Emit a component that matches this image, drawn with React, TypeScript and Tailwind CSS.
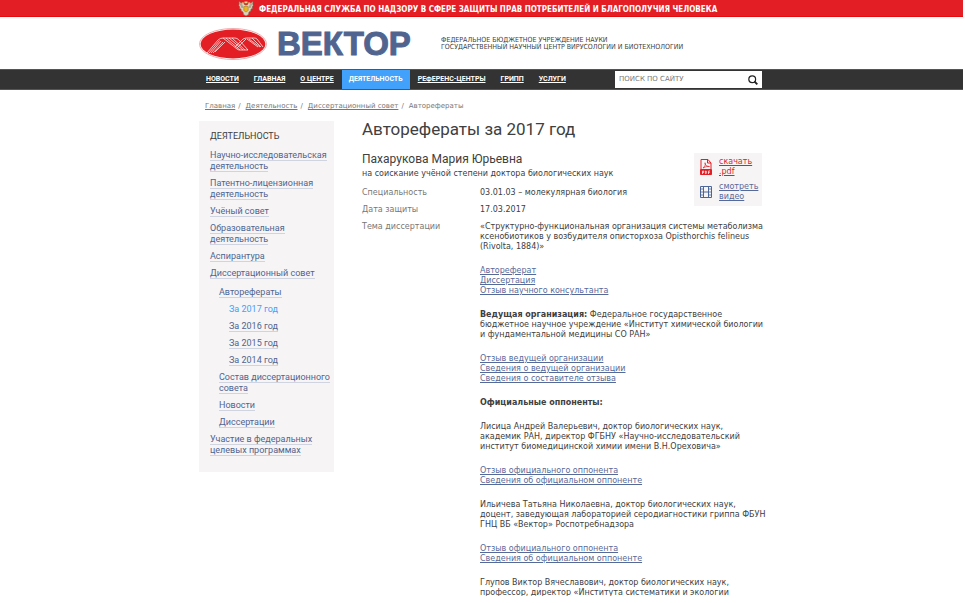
import React, { useState } from "react";

interface MenuItem {
  label: string;
  level: 0 | 1 | 2;
  active?: boolean;
  open?: boolean;
}

const navItems = [
  "Новости",
  "Главная",
  "О центре",
  "Деятельность",
  "Референс-центры",
  "Грипп",
  "Услуги",
];

const crumbs = ["Главная", "Деятельность", "Диссертационный совет"];

const menu: MenuItem[] = [
  { label: "Научно-исследовательская деятельность", level: 0 },
  { label: "Патентно-лицензионная деятельность", level: 0 },
  { label: "Учёный совет", level: 0 },
  { label: "Образовательная деятельность", level: 0 },
  { label: "Аспирантура", level: 0 },
  { label: "Диссертационный совет", level: 0, open: true },
  { label: "Авторефераты", level: 1 },
  { label: "За 2017 год", level: 2, active: true },
  { label: "За 2016 год", level: 2 },
  { label: "За 2015 год", level: 2 },
  { label: "За 2014 год", level: 2 },
  { label: "Состав диссертационного совета", level: 1 },
  { label: "Новости", level: 1 },
  { label: "Диссертации", level: 1 },
  { label: "Участие в федеральных целевых программах", level: 0 },
];

const indent = ["pl-0", "pl-[9px]", "pl-[19px]"];

const container = "w-[565px] mx-auto pr-[2px]";
const verdana = "font-['DejaVu_Sans',sans-serif]";
const tahoma = "font-['DejaVu_Sans_Condensed','DejaVu_Sans',sans-serif]";
const roboto = "font-[Roboto,sans-serif]";

function Emblem() {
  return (
    <svg viewBox="0 0 16 17" className="w-4 h-[17px] shrink-0" aria-hidden="true">
      <path
        d="M7 5 5.500 3.500 3.500 3.200 1 1.500 1.200 4 0.800 5.500 1.800 7 1.500 8.500 3 9 3.200 11 5 12 5.500 14.500 8 16 10.500 14.500 11 12 12.800 11 13 9 14.500 8.500 14.200 7 15.200 5.500 14.800 4 15 1.500 12.500 3.200 10.500 3.500 9 5Z"
        fill="#d9d2bd"
        stroke="#7d6a50"
        strokeWidth="0.600"
      />
      <path d="M2 3 4 8M14 3 12 8M3.500 4 5 8M12.500 4 11 8" stroke="#8d8068" strokeWidth="0.600" />
      <path d="M6.500 1.500h3v1.800h-3zM3.800 2.500h2v1.200h-2zM10.200 2.500h2v1.200h-2z" fill="#f0d98a" />
      <path d="M5.800 6.500h4.400v4L8 12l-2.200-1.500z" fill="#e8b620" stroke="#a8700f" strokeWidth="0.500" />
    </svg>
  );
}

function Logo() {
  return (
    <svg viewBox="0 0 68 32" className="w-[68px] h-8 shrink-0" aria-hidden="true">
      <ellipse cx="34" cy="16" rx="33.500" ry="15.500" fill="#fff" stroke="#e79a9c" strokeWidth="0.800" />
      <ellipse cx="34" cy="16" rx="32.400" ry="14.400" fill="#e31e24" />
      <g fill="none" stroke="#fff" strokeWidth="0.700">
        <path d="M8 25 19 12Q21 10 24 10H36Q38 10 40 12L49 22" />
        <path d="M10 25 20.500 12.500M12 25 22 13M14 25 24 14M16 24 26 14" />
        <path d="M24 10 38 21Q39 22 41 22H49M27 10 41 22M30 10 44 22M33 10 46 22" />
        <path d="M36 19 44 11Q46 10 48 10H55Q57 10 58 11L64 19" />
        <path d="M38 20 47 11M50 11 61 19M53 10 62 19M48 11 59 19" />
      </g>
    </svg>
  );
}

function PdfIcon() {
  return (
    <svg viewBox="0 0 12 16" className="w-3 h-4 shrink-0" fill="none" stroke="#e31e24" aria-hidden="true">
      <path d="M1 10V.5h7L11 4v6M7.500.5V4H11" />
      <path d="M3 9Q5.500 7 5.500 4.500 5 3 4.800 4.500 6 8 9.500 7.500 6 7 3 9Z" strokeWidth="0.700" />
      <path d="M.5 10.500h11v5H.5z" fill="#e31e24" />
      <path d="M2.500 15v-3h1.200v1.600H2.500M5.500 12v2.500h.7q.8-1.200 0-2.500zM8.500 15v-3h1.500M8.500 13.500h1.200" stroke="#fff" strokeWidth="0.700" />
    </svg>
  );
}

function FilmIcon() {
  return (
    <svg viewBox="0 0 12 12" className="w-3 h-3 shrink-0" fill="none" stroke="#4c6698" aria-hidden="true">
      <path d="M.5.5h11v11H.5zM3.500.5v11M8.500.5v11M3.500 6h5" />
      <path d="M0 3h3M0 6h3M0 9h3M9 3h3M9 6h3M9 9h3" strokeWidth="0.800" />
    </svg>
  );
}

function Links({ items }: { items: string[] }) {
  return (
    <p className="mb-[14px] text-[#566a9a]">
      {items.map((item) => (
        <a key={item} href="#" className="block w-fit underline">
          {item}
        </a>
      ))}
    </p>
  );
}

export default function App() {
  const [query, setQuery] = useState("");

  return (
    <div className={`h-screen overflow-hidden bg-white pr-[2px] pb-[7px] text-[#404040] ${verdana}`}>
      <div className="h-full overflow-hidden">
        <div className="bg-[#e31e24] border-b border-[#e8090d] h-[17px]">
          <div className={`${container} flex items-center h-full`}>
            <div className="flex items-center gap-[5px] pl-[39px]">
              <Emblem />
              <span className={`pt-1 text-[8px] leading-[10px] font-bold text-white whitespace-nowrap ${tahoma}`}>
                ФЕДЕРАЛЬНАЯ СЛУЖБА ПО НАДЗОРУ В СФЕРЕ ЗАЩИТЫ ПРАВ ПОТРЕБИТЕЛЕЙ И БЛАГОПОЛУЧИЯ ЧЕЛОВЕКА
              </span>
            </div>
          </div>
        </div>

        <header className={`${container} h-[52px] flex items-center pt-[2px]`}>
          <a href="#" className="flex items-center gap-[10px]">
            <Logo />
            <span className="w-[164px] text-[33px] leading-8 font-bold text-[#50648f] [-webkit-text-stroke:1px_#50648f] font-['Liberation_Sans',sans-serif]">
              ВЕКТОР
            </span>
          </a>
          <p className={`text-[7px] leading-[7px] whitespace-nowrap ${tahoma}`}>
            <span className="block">ФЕДЕРАЛЬНОЕ БЮДЖЕТНОЕ УЧРЕЖДЕНИЕ НАУКИ</span>
            <span className="block">ГОСУДАРСТВЕННЫЙ НАУЧНЫЙ ЦЕНТР ВИРУСОЛОГИИ И БИОТЕХНОЛОГИИ</span>
          </p>
        </header>

        <div className="bg-[#333] border-y border-[#555]">
          <div className={`${container} h-[19px] flex items-center justify-between`}>
            <nav className={`flex gap-px h-full ${roboto}`}>
              {navItems.map((item) => (
                <a
                  key={item}
                  href="#"
                  className={`flex items-center px-[7px] text-[7px] font-bold uppercase whitespace-nowrap text-white ${
                    item === "Деятельность" ? "bg-[#42a1fb]" : "underline"
                  }`}
                >
                  {item}
                </a>
              ))}
            </nav>
            <form className="flex items-center w-[147px] h-[17px] bg-white" onSubmit={(e) => e.preventDefault()}>
              <input
                type="text"
                aria-label="Поиск по сайту"
                placeholder="ПОИСК ПО САЙТУ"
                value={query}
                onChange={(e) => setQuery(e.target.value)}
                className="flex-1 min-w-0 px-1 text-[7px] outline-none placeholder:text-[#777]"
              />
              <button type="submit" aria-label="Найти" className="px-1">
                <svg viewBox="0 0 10 10" className="w-[10px] h-[10px]" fill="none" stroke="#222">
                  <circle cx="4.200" cy="4.200" r="3.400" strokeWidth="1.200" />
                  <path d="M6.500 6.500 9.300 9.300" strokeWidth="1.800" />
                </svg>
              </button>
            </form>
          </div>
        </div>

        <div className={container}>
          <div className="pl-[6px] pt-[11px] text-[7px] leading-[10px] text-[#777] flex gap-[5px] whitespace-nowrap">
            {crumbs.map((crumb) => (
              <span key={crumb} className="flex gap-[3px]">
                <a href="#" className="underline">
                  {crumb}
                </a>
                /
              </span>
            ))}
            <span>Авторефераты</span>
          </div>

          <div className="flex items-start pt-[10px]">
            <aside className={`w-[135px] shrink-0 bg-[#f6f4f5] pl-[11px] pt-[10px] pb-[10px] text-[9px] leading-[11px] ${roboto}`}>
              <h2 className="mb-2 uppercase">Деятельность</h2>
              <ul>
                {menu.map((item) => (
                  <li key={item.label} className={`${item.open ? "mb-2" : "mb-[6px]"} ${indent[item.level]}`}>
                    <a
                      href="#"
                      className={
                        item.active ? "text-[#42a1fb]" : "text-[#50648f] border-b border-[#d0d4e0]"
                      }
                    >
                      {item.label}
                    </a>
                  </li>
                ))}
              </ul>
            </aside>

            <main className="flex-1 min-w-0 pl-7 text-[8px] leading-[10px]">
              <h1 className={`text-[17px] leading-4 ${roboto}`}>Авторефераты за 2017 год</h1>
              <div className="flex justify-between pt-4">
                <div>
                  <h2 className={`text-[12px] leading-3 ${roboto}`}>Пахарукова Мария Юрьевна</h2>
                  <p className="pt-1">на соискание учёной степени доктора биологических наук</p>
                </div>
                <div className="w-[68px] h-[53px] -mb-[39px] bg-[#f6f4f5] pl-[6px] pt-1 flex flex-col gap-[5px]">
                  <a href="#" className="flex items-center gap-[7px] text-[#e31e24] underline">
                    <PdfIcon />
                    <span>
                      скачать
                      <br />
                      .pdf
                    </span>
                  </a>
                  <a href="#" className="flex items-center gap-[7px] text-[#566a9a] underline">
                    <FilmIcon />
                    <span>
                      смотреть
                      <br />
                      видео
                    </span>
                  </a>
                </div>
              </div>

              <dl className="grid grid-cols-[118px_1fr] gap-y-[7px] pt-[9px]">
                <dt className="text-[#777]">Специальность</dt>
                <dd>03.01.03 – молекулярная биология</dd>
                <dt className="text-[#777]">Дата защиты</dt>
                <dd>17.03.2017</dd>
                <dt className="text-[#777]">Тема диссертации</dt>
                <dd className="whitespace-nowrap">
                  <p className="mb-[14px]">
                    «Структурно-функциональная организация системы метаболизма
                    <br />
                    ксенобиотиков у возбудителя описторхоза Opisthorchis felineus
                    <br />
                    (Rivolta, 1884)»
                  </p>
                  <Links items={["Автореферат", "Диссертация", "Отзыв научного консультанта"]} />
                  <p className="mb-[14px]">
                    <b>Ведущая организация:</b> Федеральное государственное
                    <br />
                    бюджетное научное учреждение «Институт химической биологии
                    <br />
                    и фундаментальной медицины СО РАН»
                  </p>
                  <Links
                    items={[
                      "Отзыв ведущей организации",
                      "Сведения о ведущей организации",
                      "Сведения о составителе отзыва",
                    ]}
                  />
                  <p className="mb-[14px] font-bold">Официальные оппоненты:</p>
                  <p className="mb-[14px]">
                    Лисица Андрей Валерьевич, доктор биологических наук,
                    <br />
                    академик РАН, директор ФГБНУ «Научно-исследовательский
                    <br />
                    институт биомедицинской химии имени В.Н.Ореховича»
                  </p>
                  <Links items={["Отзыв официального оппонента", "Сведения об официальном оппоненте"]} />
                  <p className="mb-[14px]">
                    Ильичева Татьяна Николаевна, доктор биологических наук,
                    <br />
                    доцент, заведующая лабораторией серодиагностики гриппа ФБУН
                    <br />
                    ГНЦ ВБ «Вектор» Роспотребнадзора
                  </p>
                  <Links items={["Отзыв официального оппонента", "Сведения об официальном оппоненте"]} />
                  <p>
                    Глупов Виктор Вячеславович, доктор биологических наук,
                    <br />
                    профессор, директор «Института систематики и экологии
                  </p>
                </dd>
              </dl>
            </main>
          </div>
        </div>
      </div>
    </div>
  );
}
